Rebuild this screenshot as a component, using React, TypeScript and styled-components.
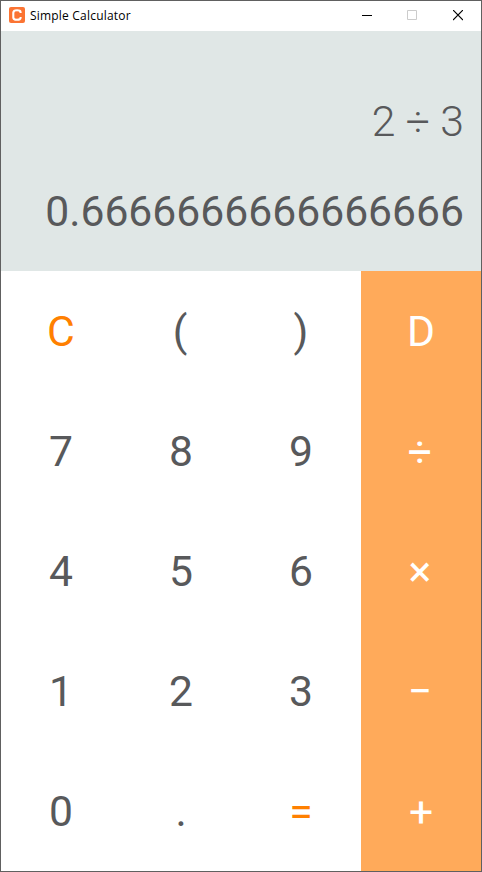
import React from 'react';
import styled, { createGlobalStyle } from 'styled-components';

const GlobalStyle = createGlobalStyle`
  * { box-sizing: border-box; }
  body { margin: 0; background: #fff; }
`;

const Window = styled.main`
  width: 482px;
  height: 872px;
  border: 1px solid #606060;
  display: flex;
  flex-direction: column;
  font-family: Roboto, sans-serif;
  color: #58595b;
  background: #fff;
`;

const TitleBar = styled.header`
  height: 30px;
  flex: none;
  display: flex;
  align-items: center;
  padding-left: 8px;
`;

const AppIcon = styled.svg`
  margin-bottom: 2px;
`;

const Title = styled.span`
  flex: 1;
  margin-left: 5px;
  font: 12px/16px 'Open Sans', sans-serif;
  letter-spacing: 0.2px;
  color: #000;
`;

const WindowControls = styled.div`
  display: flex;
  gap: 35px;
  padding: 0 18px 1px 0;
`;

const WindowButton = styled.button<{ $disabled?: boolean }>`
  width: 10px;
  height: 11px;
  padding: 0;
  border: 0;
  background: none;
  display: flex;
  color: ${(p) => (p.$disabled ? '#ccc' : '#000')};

  &:last-child { margin-left: 1px; }
`;

const Display = styled.section`
  height: 240px;
  flex: none;
  padding: 45px 17px 0 0;
  background: #e0e7e6;
  text-align: right;
  font-size: 42.667px;
`;

const Expression = styled.div`
  height: 90px;
  line-height: 90px;
  font-weight: 300;
`;

const Result = styled.div`
  height: 90px;
  line-height: 90px;
`;

const Keypad = styled.section`
  display: grid;
  grid-template-columns: repeat(4, 120px);
  grid-template-rows: repeat(5, 120px);
`;

type Tone = 'plain' | 'accent' | 'operator';

const Key = styled.button<{ $tone: Tone; $left?: boolean; $low?: boolean }>`
  padding: ${(p) => (p.$low ? 2 : 0)}px ${(p) => (p.$left ? 2 : 0)}px 0 0;
  border: 0;
  font: 400 42.667px/100px Roboto, sans-serif;
  color: ${(p) => ({ plain: '#58595b', accent: '#ff8000', operator: '#fff' })[p.$tone]};
  background: ${(p) => (p.$tone === 'operator' ? '#ffaa5a' : '#fff')};
`;

const keys = ['C', '(', ')', 'D', '7', '8', '9', '÷', '4', '5', '6', '×', '1', '2', '3', '−', '0', '.', '=', '+'];

const toneOf = (label: string, index: number): Tone =>
  index % 4 === 3 ? 'operator' : label === 'C' || label === '=' ? 'accent' : 'plain';

export default function App() {
  return (
    <Window>
      <GlobalStyle />
      <TitleBar>
        <AppIcon width="16" height="16" viewBox="0 0 16 16">
          <rect width="16" height="16" rx="2" fill="#fb7433" />
          <path d="M11.6 6V5.4Q11.6 3.2 8 3.2T4.3 5.6v4.8q0 2.4 3.7 2.4t3.6-2.2V10" fill="none" stroke="#fff" strokeWidth="2.1" />
        </AppIcon>
        <Title>Simple Calculator</Title>
        <WindowControls>
          <WindowButton aria-label="Minimize">
            <svg width="10" height="11"><path d="M0 5.5h10" stroke="currentColor" /></svg>
          </WindowButton>
          <WindowButton $disabled aria-label="Maximize">
            <svg width="10" height="11"><path d="M.5.5h9v9h-9z" fill="none" stroke="currentColor" /></svg>
          </WindowButton>
          <WindowButton aria-label="Close">
            <svg width="10" height="11"><path d="M0 0l10 10M10 0L0 10" stroke="currentColor" strokeWidth="1.2" /></svg>
          </WindowButton>
        </WindowControls>
      </TitleBar>
      <Display>
        <Expression>2 ÷ 3</Expression>
        <Result>0.6666666666666666</Result>
      </Display>
      <Keypad>
        {keys.map((label, i) => (
          <Key
            key={label}
            $tone={toneOf(label, i)}
            $left={'(÷×−'.includes(label)}
            $low={'÷+'.includes(label)}
          >
            {label}
          </Key>
        ))}
      </Keypad>
    </Window>
  );
}
